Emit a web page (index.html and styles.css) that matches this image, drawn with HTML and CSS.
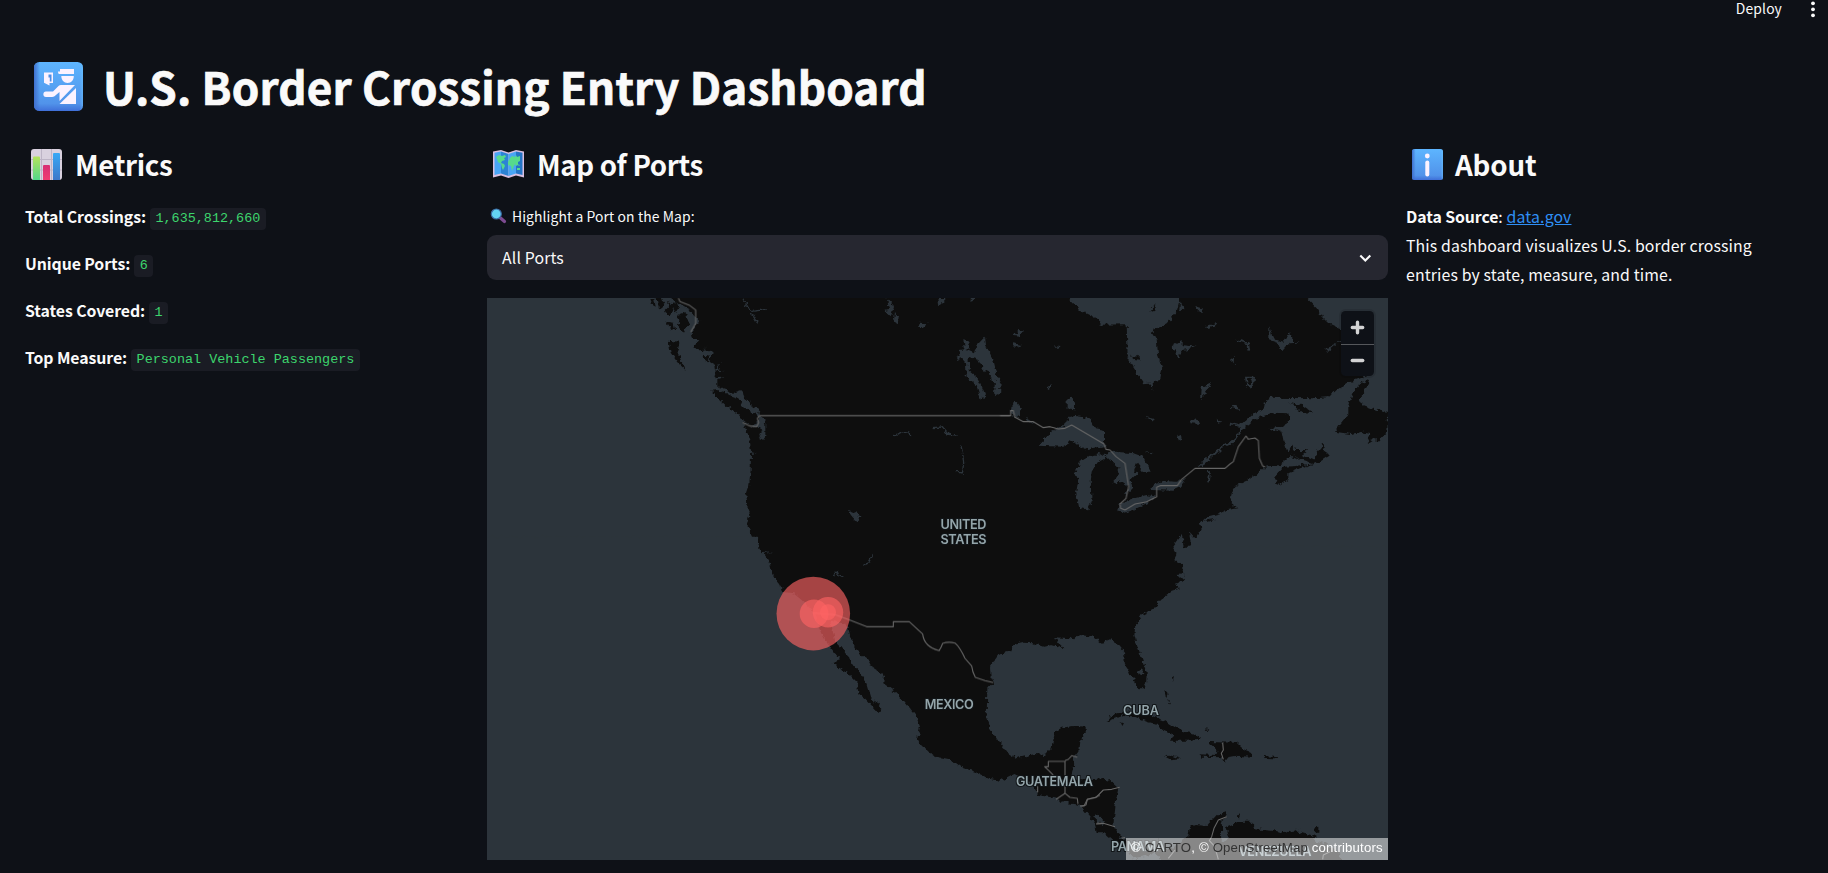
FILE: index.html
```html
<!DOCTYPE html>
<html lang="en">
<head>
<meta charset="utf-8">
<title>U.S. Border Crossing Entry Dashboard</title>
<link rel="stylesheet" href="styles.css">
</head>
<body>
<header class="toolbar">
  <span class="deploy">Deploy</span>
  <svg class="kebab" width="6" height="18" viewBox="0 0 6 18" fill="#fafafa"><circle cx="3" cy="3.3" r="1.9"/><circle cx="3" cy="9.300" r="1.9"/><circle cx="3" cy="15.300" r="1.9"/></svg>
</header>
<main class="page">
  <h1 class="title">
    <svg class="icon-title" viewBox="0 0 49 49">
      <defs>
        <linearGradient id="blue" x1="0" y1="0" x2="0" y2="1"><stop offset="0" stop-color="#5db5ff"/><stop offset=".85" stop-color="#5193ea"/><stop offset="1" stop-color="#3f6fd8"/></linearGradient>
        <linearGradient id="side" x1="0" y1="0" x2="1" y2="0"><stop offset="0" stop-color="#3f6fce"/><stop offset=".12" stop-color="#3f6fce" stop-opacity="0"/><stop offset=".93" stop-color="#6cc6ff" stop-opacity="0"/><stop offset="1" stop-color="#6cc6ff" stop-opacity=".5"/></linearGradient>
      </defs>
      <rect width="49" height="49" rx="5.5" fill="url(#blue)"/><rect width="49" height="49" rx="5.5" fill="url(#side)"/>
      <g fill="#fbf2ff">
        <path d="M10 10.500h9v10.500h-3.500v2.500l-5.500-2.800z"/>
        <path d="M26 7h14v5h-15.500v-1.300h-.5v-1.200h2z"/>
        <path d="M27.300 14h12.500c0 4-2.500 7-6.200 7s-6.300-3-6.300-7z"/>
        <path d="M12 29.500h7l5.500-5.500q1-1 2.500-1h14l-15.500 16v-9l-5 4.200q-1 .8-2.500.8h-6c-3.500 0-3.500-5.500 0-5.500z"/>
        <path d="M42 26v16h-16.500z"/>
      </g>
      <path d="M14.500 12.500h3v7h-1.700v-4h-1.300z" fill="#4d8fe5"/>
    </svg>
    <span class="title-text">U.S. Border Crossing Entry Dashboard</span>
  </h1>
  <div class="columns">
    <section class="metrics">
      <h2 class="heading">
        <svg class="icon-heading" viewBox="0 0 31 31">
          <defs>
            <linearGradient id="gb" x1="0" y1="0" x2="0" y2="1"><stop offset="0" stop-color="#b4e35c"/><stop offset="1" stop-color="#54d78b"/></linearGradient>
            <linearGradient id="rb" x1="0" y1="0" x2="0" y2="1"><stop offset="0" stop-color="#d72f75"/><stop offset="1" stop-color="#f03b70"/></linearGradient>
            <linearGradient id="bb" x1="0" y1="0" x2="0" y2="1"><stop offset="0" stop-color="#37a8f5"/><stop offset="1" stop-color="#3c78c9"/></linearGradient>
          </defs>
          <rect width="31" height="31" rx="3" fill="#d9d1df"/>
          <path d="M10.500 0v31M20.500 0v31M0 10.500h31M0 21h31" stroke="#bdb4c6" stroke-width="1"/>
          <path d="M2 31V8.500q0-1 1-1h5q1 0 1 1V31z" fill="url(#gb)"/>
          <path d="M12 31V17q0-1 1-1h5q1 0 1 1V31z" fill="url(#rb)"/>
          <path d="M22 31V5q0-1 1-1h5q1 0 1 1V31z" fill="url(#bb)"/>
        </svg>
        <span>Metrics</span>
      </h2>
      <p class="metric"><b>Total Crossings:</b><code>1,635,812,660</code></p>
      <p class="metric"><b>Unique Ports:</b><code>6</code></p>
      <p class="metric"><b>States Covered:</b><code>1</code></p>
      <p class="metric"><b>Top Measure:</b><code>Personal Vehicle Passengers</code></p>
    </section>

    <section class="ports">
      <h2 class="heading">
        <svg class="icon-heading" viewBox="0 0 31 31">
          <path d="M0 2.500l8-1.500 7.500 2.500 7.500-2.500 8 1.500v26l-8-2-7.500 2.500-7.500-2.500-8 2z" fill="#d8bfe0"/>
          <path d="M1.500 3.800l6.500-1.300v22l-6.500 1.500z" fill="#48a5f5"/><path d="M8 2.500l7.500 2.500v22l-7.500-2.500z" fill="#2c83d5"/>
          <path d="M15.500 5l7.500-2.500v22l-7.500 2.500z" fill="#48a5f5"/><path d="M23 2.500l6.500 1.300v22.200l-6.500-1.500z" fill="#2575c6"/>
          <path d="M3 8l3-2 3 1 3-1 1 2-2 1 1 2-3 1-1 2 3 1 1 2-2 4-1-2-1-4-3-2-1-3zM15 13l2-4 2-2 3 1 1-2 1 2 3-1v5l-2 1v3l-2 1-1-2-1 2-2 5-1-5-3-1zM24 15l3 1-1 1zM24 19h3v2h-3z" fill="#56db8c"/>
        </svg>
        <span>Map of Ports</span>
      </h2>
      <label class="field-label">
        <svg class="icon-search" viewBox="0 0 17 17"><path d="M10.500 10l4 3.500" stroke="#7d4b91" stroke-width="3.200" stroke-linecap="round"/><circle cx="6.300" cy="6" r="5" fill="#63d3f3" stroke="#3c6ca5" stroke-width="1.200"/></svg>
        <span class="label-text">Highlight a Port on the Map:</span>
      </label>
      <div class="select"><span>All Ports</span>
        <svg width="14" height="10" viewBox="0 0 14 10"><path d="M2.300 2.500l5 5 5-5" fill="none" stroke="#fafafa" stroke-width="2.100"/></svg>
      </div>
      <div class="map">
        <svg class="map-canvas" viewBox="487 298 901 562">
          <defs>
            <filter id="coast" filterUnits="userSpaceOnUse" color-interpolation-filters="sRGB" x="470" y="280" width="940" height="600">
              <feTurbulence type="fractalNoise" baseFrequency=".22" numOctaves="2" seed="5"/>
              <feDisplacementMap in="SourceGraphic" scale="6" xChannelSelector="R" yChannelSelector="G"/>
            </filter>
          </defs>
          <rect x="487" y="298" width="901" height="563" fill="#0e0e0e"/>
          <g filter="url(#coast)" fill="#2c343b">
            <!-- Pacific north, Canadian prairie and Rocky Mountain lakes -->
            <g transform="translate(640 290) scale(.33333)">
              <path d="M-500-20H80L100 30 118 42 150 60 163 75 178 90 165 112 155 125 160 150 178 150 163 168 185 190 202 163 192 178 218 187 207 213 223 222 225 240 247 213 232 238 258 244 230 242 226 265 257 262 232 270 232 290 262 300 275 310 305 300 310 325 335 345 333 325 338 350 358 356 355 370 365 378 376 400 376 440 368 452 355 448 365 420 350 410 340 412 310 400 320 425 330 455 333 485 350 490 333 492 332 540 327 590 319 615 323 655 329 670 321 705 335 735 338 760 362 790 398 787 373 792 382 808 390 835 388 845 405 870 418 890 424 910 424 970H-500z"/>
              <path fill="#0e0e0e" d="M85 152L118 155 112 185 120 205 137 240 112 217 92 188zM213 302L240 300 265 315 295 325 310 350 345 372 355 380 352 400 330 408 305 390 290 370 262 350 235 325zM30 24L42 24 47 50 38 45zM50 24L66 24 73 45 57 58zM72 65L86 50 85 35 100 50 90 78zM95 42L110 35 119 62 105 70zM78 95L100 98 106 122 92 118zM112 75L136 65 146 100 132 128 118 110zM190 195L206 196 204 220 193 210z"/>
              <path d="M740 24L762 48 752 82 733 62 748 60zM765 65L773 82 770 102 762 90zM892 24H920L895 50zM988 24H1005L995 32zM838 98L863 100 848 115 838 112zM970 150L992 160 980 180 1002 190 1008 168 1035 140 1038 165 1055 200 1062 230 1082 280 1080 310 1070 318 1062 310 1065 275 1055 270 1050 250 1030 240 1015 210 985 200 990 245 1010 262 1025 290 1037 320 1022 326 1010 285 980 260 978 220 965 205 955 210 950 198 962 195 958 180 975 178zM1140 118L1120 138 1140 140zM1117 160L1140 170V165zM1125 338L1140 350V385L1118 378 1112 360zM627 659L640 668 650 664 658 683 648 695 634 680z"/>
              <g fill="none" stroke="#2c343b" stroke-width="4"><path d="M308 26L330 62 353 100M330 65L380 58M760 435L770 438 782 430 808 425 812 438M878 413L905 411 925 433 950 435M963 468L968 490 971 520 966 555M948 545H970M670 826L687 818 700 792M580 855L592 842 597 855 610 860"/></g>
            </g>
            <!-- Hudson Bay, Great Lakes, Gulf of St. Lawrence, north Atlantic -->
            <g transform="translate(1000 290) scale(.33333)">
              <path d="M195-10L205 24 240 60 270 75 300 92 302 104 380 103 383 200 400 235 430 280 450 278 460 300 458 275 480 270 487 235 475 200 470 150 455 125 500 100 530 65 540 24V-10z"/>
              <path fill="#0e0e0e" d="M390 198L410 196 425 212 405 210zM448 65L470 40 465 60z"/>
              <path d="M905-20L920 24 950 55 965 80 985 100 1018 115 1040 140 1020 155 980 190 980 175 1020 158 1100 165V258L1040 280 1010 300 985 322 940 325 815 323 795 335 790 360 760 370 720 405 715 430 690 455 655 475 620 505 598 518 610 515 595 532 612 525 640 500 665 475 700 460 730 415 770 385 820 368 865 370 868 385 850 410 805 415 845 425 850 450 860 480 900 510 870 500 840 525 795 530 780 545 745 570 710 585 695 610 690 635 715 655 680 660 660 670 620 680 600 700 605 715 585 750 567 730 575 770 555 800 550 835 560 890H1230V-20z"/>
              <path fill="#0e0e0e" d="M822 560L850 530 890 528 940 520 900 508 865 485 875 465 885 480 925 480 905 495 945 512 950 485 972 460 970 482 990 495 960 515 900 535 865 550 865 570 838 588zM1108 268L1080 280 1060 310 1045 345 1045 375 1005 425 1050 432 1090 425 1115 430 1100 460 1130 440 1130 460 1162 425 1164 370 1130 360 1090 345 1075 335 1095 300zM868 340L905 345 940 370 905 365zM610 692L650 686 620 696z"/>
              <path d="M115 467L150 425 195 405 205 380 230 378 270 385 285 415 312 420 312 455 320 468 290 472 260 478 235 465 220 452 190 470zM225 548L240 515 270 498 300 492 320 505 290 520 275 545 272 580 275 635 265 658 238 655 228 610 235 570zM310 492L345 485 400 490 430 500 452 545 430 545 410 520 402 545 412 550 392 570 398 595 375 620 385 590 358 572 348 585 337 580 350 565 358 535 330 510zM352 660L360 640 400 625 440 615 470 620 440 640 400 660 375 668zM452 600L465 580 490 573 530 575 555 565 545 590 520 602zM200 330L215 320 225 335 225 358 200 355zM510 172L545 150 545 165 590 170 550 180 530 203 525 182zM617 108L655 98 640 110 622 117zM583 48L605 55 605 66 590 62zM540 35L554 58 538 56zM603 332L605 295 640 278 615 305zM735 260L765 260 763 280 750 300 738 282zM690 208L705 202 704 220zM808 105L818 145 850 155 870 125 880 155 903 158 868 160 845 185 835 160 808 150zM568 400L588 385 602 402zM438 380L464 388 460 395zM650 388L668 392 655 398zM530 432L545 440 540 455zM690 354L705 345 722 360zM42 138L58 120 74 122 60 130zM37 160L65 165 50 173zM162 166L183 168 170 174zM135 292L160 285 145 298zM433 488L460 485 460 490zM34 345L50 338 63 360 52 380 35 372zM78 380L105 395 90 400zM517 770L545 732 555 770 550 820 520 812 538 805zM530 852L555 850 550 870z"/>
              <g fill="none" stroke="#2c343b" stroke-width="5"><path d="M627 540L624 580M710 150L745 160 748 182M688 400L720 408"/></g>
              <ellipse cx="750" cy="274" rx="8" ry="8" fill="#0e0e0e"/>
            </g>
            <!-- Pacific south -->
            <g transform="translate(740 550) scale(.33333)">
              <path d="M-800-40H50L60 0 80 25 92 60 105 85 122 105 125 125 160 130 185 150 210 175 225 195 235 225 245 250 262 280 285 310 302 330 275 340 295 352 325 370 350 395 355 430 380 450 412 485 424 475 405 448 400 458 390 440 380 405 365 370 345 350 325 320 300 290 285 275 278 240 270 210 290 212 325 230 330 260 350 300 390 335 400 355 432 375 430 400 465 425 490 450 527 495 540 530 532 565 545 590 590 620 630 628 660 650 705 665 740 685 780 692 820 672 860 690 880 708 895 735 945 745 985 760 1020 765 1065 820 1070 850 1090 850 1120 875 1160 900 1180 925 1230 915 1245 900 1265 940 1280 990H-800z"/>
            </g>
            <!-- Gulf of Mexico, Caribbean, Atlantic -->
            <g transform="translate(1080 560) scale(.33333)">
              <path d="M980-40H300L280 0 310 15 315 50 295 45 312 58 285 72 300 85 275 92 240 120 215 150 185 165 165 200 163 225 172 260 190 310 200 340 198 370 190 385 175 385 155 345 135 315 132 275 110 248 90 238 65 248 40 230 0 225-30 235-75 232-50 265-85 255-110 260-140 250-170 248-200 255-210 275-245 285-270 320-268 350-260 367-278 385-280 470-265 515-240 550-220 577-190 595-135 582-105 585-85 565-75 515-55 503-15 497 17 500 17 520-2 545-5 575-20 595-22 630-30 657 20 662 60 658 90 662 115 685 108 720 100 795 110 820 135 840 165 858 240 840 260 870 300 850 325 830 330 800 345 795 380 798 410 765 435 757 440 770 420 785 430 800 420 830 430 852 448 830 438 800 475 785 515 785 525 805 580 810 610 820 680 802 640 812 690 825 710 830 705 842 735 850 780 880 790 930H980z"/>
              <path fill="#0e0e0e" d="M80 485L95 465 125 457 170 460 215 468 250 480 285 502 310 515 340 520 362 535 320 542 270 542 280 525 250 512 235 495 200 485 165 470 130 465 100 478zM384 546L470 548 490 568 518 578 515 590 470 587 445 592 435 605 425 592 365 590 355 583 410 585 412 570zM252 588L275 587 303 598 275 601zM552 585L593 589 585 598 553 597zM252 390L263 402 258 412zM262 415L270 430 265 428zM276 352L283 348 278 365zM122 487L132 490 127 498zM375 508L392 511 380 513zM468 770L475 763 480 772zM703 802L718 800 718 818 705 818z"/>
              <path d="M174 332L185 328 190 338 180 345zM42 770L55 764 75 785 65 792z"/>
            </g>
          </g>
          <!-- borders -->
          <g fill="none" stroke="#666" stroke-width="3.300" stroke-linejoin="round">
            <path transform="translate(640 290) scale(.33333)" d="M115 24L120 35 147 45 167 60V100L152 126M308 398L330 408 350 410 356 398 352 385 358 377H1110"/>
            <path transform="translate(1000 290) scale(.33333)" d="M0 377H32V362H40L45 382 70 395 100 395 130 413 150 410 175 417 195 415 215 405 312 462 318 478 330 480 348 500 375 520 386 590 378 625 360 642 362 655 375 660 405 642 440 635 470 620V592L480 587H532L545 568 585 535H675L690 522 700 515 715 470 738 438 745 448 765 444 775 452 778 505 788 528 795 530"/>
            <path transform="translate(740 550) scale(.33333)" d="M218 189L285 194 330 210 380 230H460V215H508L548 252Q552 290 597 302Q604 292 608 280Q625 274 645 279Q660 292 675 325L695 348Q697 365 706 382L735 392 760 398M940 676L927 662 914 650 925 650V634H975V730L948 748M975 632L985 628 995 617 1012 622M893 708V727M973 728L990 742 1012 745 1014 762M1020 768L1032 768 1042 748 1065 743 1080 735M1070 820H1085"/>
            <path transform="translate(1080 560) scale(.33333)" d="M5 738L18 735 22 718 48 712 70 690 95 688 119 682M48 792L70 790 105 800M125 835L135 833M428 548L430 570 424 580 430 598M440 770L415 780 402 805 395 830 388 842 400 855 410 880 415 898M285 870L265 895M750 875L730 885 728 898"/>
          </g>
          <g fill="#ff6464"><circle cx="813.300" cy="613.600" r="36.800" opacity=".63"/><circle cx="814" cy="613.700" r="14.300" opacity=".63"/><circle cx="828" cy="612.200" r="15.200" opacity=".63"/><circle cx="828" cy="612.200" r="8" opacity=".63"/></g>
          <g class="map-labels" text-anchor="middle">
            <text x="963.500" y="528.600" textLength="46">UNITED</text><text x="963.500" y="543.600" textLength="46">STATES</text>
            <text x="949.300" y="708.500" textLength="49">MEXICO</text><text x="1054.500" y="786" textLength="77">GUATEMALA</text>
            <text x="1141" y="714.700" textLength="36">CUBA</text><text x="1138" y="851" textLength="54">PANAMA</text><text x="1275" y="856" textLength="73">VENEZUELA</text>
          </g>
        </svg>
        <div class="zoom">
          <span class="zoom-btn"><svg width="15" height="15" viewBox="0 0 15 15"><path d="M7.500 2.300v10.400M2.300 7.500h10.400" stroke="#d3d3d4" stroke-width="3.400" stroke-linecap="round"/></svg></span>
          <span class="zoom-btn zoom-out"><svg width="15" height="15" viewBox="0 0 15 15"><path d="M2.300 7.500h10.400" stroke="#d3d3d4" stroke-width="3.400" stroke-linecap="round"/></svg></span>
        </div>
        <div class="attribution">© <a>CARTO</a>, © <a>OpenStreetMap</a> contributors</div>
      </div>
    </section>

    <section class="about">
      <h2 class="heading heading-about">
        <svg class="icon-heading" viewBox="0 0 31 31"><rect width="31" height="31" rx="2.500" fill="url(#blue)"/><rect width="31" height="31" rx="2.500" fill="url(#side)"/><circle cx="15.300" cy="7" r="2.400" fill="#fbf2ff"/><rect x="13.300" y="11.500" width="4" height="16" rx="2" fill="#fbf2ff"/></svg>
        <span>About</span>
      </h2>
      <p class="copy"><b>Data Source</b>: <a class="link">data.gov</a><br>This dashboard visualizes U.S. border crossing<br>entries by state, measure, and time.</p>
    </section>
  </div>
</main>
</body>
</html>
```
FILE: styles.css
```css
* { box-sizing: border-box; }
body {
  margin: 0;
  height: 873px;
  overflow: hidden;
  background: #0e1117;
  color: #fafafa;
  font-family: "Source Sans Pro", "Noto Sans CJK SC", "Noto Sans", sans-serif;
  font-size: 15.85px;
  line-height: 28.9px;
  letter-spacing: .125px;
}
.toolbar {
  height: 17px;
  display: flex;
  justify-content: flex-end;
  align-items: center;
  gap: 28px;
  padding-right: 12px;
  font-size: 13.9px;
  line-height: 17px;
}
.deploy { margin-top: -1px; }
.page { padding: 39px 25px 0; }
.title {
  margin: 0;
  height: 60px;
  display: flex;
  align-items: center;
  font-size: 44px;
  font-weight: 700;
  line-height: 60px;
  letter-spacing: .17px;
}
.icon-title { width: 49px; height: 49px; margin: 1px 20px 0 9px; }
.title-text { white-space: nowrap; -webkit-text-stroke: .7px #fafafa; }
.columns {
  display: grid;
  grid-template-columns: 444px 901px 397px;
  column-gap: 18px;
  padding-top: 30px;
}
.heading {
  margin: 0 0 20px;
  height: 36px;
  display: flex;
  align-items: center;
  gap: 13px;
  padding-left: 6px;
  font-size: 27.7px;
  font-weight: 700;
  line-height: 36px;
  letter-spacing: -.35px;
}
.heading-about { gap: 12px; letter-spacing: -.15px; }
.icon-heading { width: 31px; height: 31px; margin-top: 1px; }
.metric {
  margin: 0 0 18px;
  height: 29px;
  display: flex;
  align-items: center;
}
.metric b, .copy b {
  position: relative;
  top: 1px;
  font-weight: 700;
  letter-spacing: -.09px;
}
.copy b { top: 0; }
code {
  height: 22px;
  margin: 4px 0 0 4px;
  padding: 0 5.5px;
  border-radius: 4px;
  background: #1a1c24;
  color: #3dd56d;
  font: 13.45px/22px "Liberation Mono", monospace;
  letter-spacing: 0;
}
.field-label {
  height: 33px;
  display: flex;
  align-items: flex-start;
  gap: 5px;
  padding-left: 3px;
  font-size: 13.9px;
  letter-spacing: .09px;
}
.icon-search { width: 17px; height: 17px; margin-top: 6px; }
.select {
  height: 45px;
  display: flex;
  align-items: center;
  justify-content: space-between;
  padding: 1px 16px 0 15px;
  border-radius: 9px;
  background: #262730;
}
.map {
  position: relative;
  height: 562px;
  margin-top: 18px;
  overflow: hidden;
}
.map-canvas { display: block; width: 901px; height: 562px; }
.map-labels text {
  fill: #94a5aa;
  stroke: #111518;
  stroke-width: 2px;
  paint-order: stroke;
  font: 600 12.7px Inter, sans-serif;
  letter-spacing: 0;
}
.zoom {
  position: absolute;
  top: 13px;
  right: 14px;
  width: 33px;
  height: 65px;
  border-radius: 4.5px;
  background: #0e1117;
  box-shadow: 0 0 0 2px rgba(0, 0, 0, .1);
}
.zoom-btn {
  height: 33px;
  display: flex;
  align-items: center;
  justify-content: center;
}
.zoom-out { height: 32px; border-top: 1px solid #55575b; }
.attribution {
  position: absolute;
  right: 0;
  bottom: 0;
  height: 22px;
  width: 262px;
  padding-left: 5px;
  background: rgba(255, 255, 255, .5);
  color: #fff;
  font: 13.2px/20px "Liberation Sans", Arial, sans-serif;
  letter-spacing: .17px;
  white-space: nowrap;
}
.attribution a { color: #333; }
.copy { margin: 0; padding-top: 1px; white-space: nowrap; }
.link { color: #2f8ff5; text-decoration: underline; }
```
